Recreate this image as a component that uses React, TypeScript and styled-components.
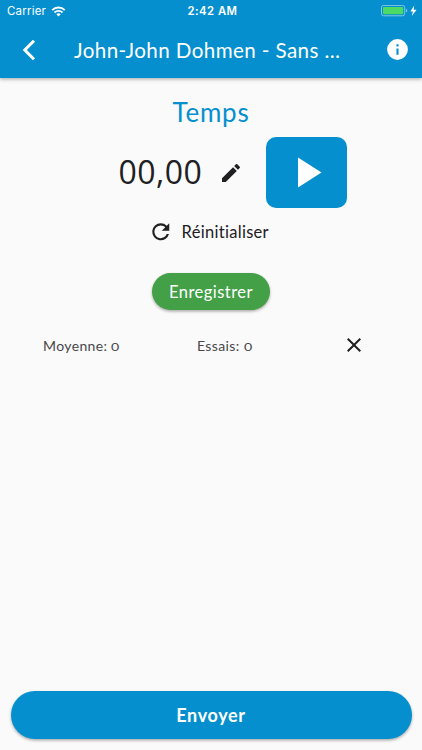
import React from "react";
import styled, { createGlobalStyle } from "styled-components";

const BLUE = "#058fce";
const INK = "#202023";

const GlobalStyle = createGlobalStyle`
  * { box-sizing: border-box; }
  body { margin: 0; background: #fafafa; }
  button { border: 0; padding: 0; margin: 0; background: none; font: inherit; color: inherit; }
  svg { display: block; flex: none; }
`;

const Screen = styled.div`
  display: flex;
  flex-direction: column;
  width: 422px;
  height: 750px;
  background: #fafafa;
  color: ${INK};
  font-family: Lato, "Open Sans", sans-serif;
  white-space: nowrap;
  overflow: hidden;
`;

const Header = styled.header`
  flex: none;
  height: 78px;
  background: ${BLUE};
  color: #fff;
  box-shadow: 0 1px 4px rgba(0, 0, 0, 0.35);
`;

const StatusBar = styled.div`
  display: grid;
  grid-template-columns: 1fr auto 1fr;
  align-items: center;
  height: 22px;
  padding: 0 4px 0 7px;
  font: 400 11.5px/22px Inter, sans-serif;
`;

const Carrier = styled.div`
  display: flex;
  align-items: center;
  gap: 5px;
  letter-spacing: 0.2px;
`;

const Clock = styled.div`
  font-weight: 600;
  font-size: 11.3px;
  letter-spacing: 0.45px;
`;

const Power = styled.div`
  display: flex;
  justify-content: flex-end;
  align-items: center;
`;

const NavBar = styled.div`
  display: flex;
  align-items: center;
  height: 56px;
  padding: 0 12px 1px 22px;
`;

const Title = styled.h1`
  flex: 1;
  margin: 0 0 0 38px;
  font-size: 20.6px;
  font-weight: 400;
  line-height: 28px;
  letter-spacing: 0.4px;
`;

const Main = styled.main`
  flex: 1;
  display: flex;
  flex-direction: column;
  align-items: center;
`;

const Heading = styled.h2`
  margin: 18px 0 0;
  font-size: 26px;
  font-weight: 400;
  line-height: 32px;
  letter-spacing: 0.75px;
  color: ${BLUE};
`;

const TimerRow = styled.div`
  display: flex;
  align-items: center;
  width: 100%;
  height: 71px;
  margin-top: 9px;
  padding-left: 118px;
`;

const Time = styled.div`
  width: 101px;
  margin-top: -1px;
  padding-left: 0.5px;
  font: 400 32px/44px "Open Sans", sans-serif;
  letter-spacing: 0.45px;
`;

const PlayButton = styled.button`
  display: flex;
  align-items: center;
  justify-content: center;
  width: 81px;
  height: 71px;
  margin-left: 23px;
  padding-left: 6px;
  border-radius: 10px;
  background: ${BLUE};
  color: #fff;
`;

const ResetButton = styled.button`
  display: flex;
  align-items: center;
  gap: 8px;
  height: 24px;
  margin: 12px 5px 1px 0;
  font-size: 16.5px;
  letter-spacing: 0.3px;
`;

const PillButton = styled.button<{ $wide?: boolean }>`
  flex: none;
  width: ${(p) => (p.$wide ? "401px" : "118px")};
  height: ${(p) => (p.$wide ? "48px" : "37px")};
  border-radius: 24px;
  background: ${(p) => (p.$wide ? BLUE : "#43a047")};
  color: #fff;
  font-size: ${(p) => (p.$wide ? "18px" : "16.5px")};
  font-weight: ${(p) => (p.$wide ? 700 : 400)};
  letter-spacing: ${(p) => (p.$wide ? "0.65px" : "0.45px")};
  box-shadow: 0 1.5px 3px rgba(0, 0, 0, 0.32);
`;

const SaveSlot = styled.div`
  margin-top: 28px;
`;

const Stats = styled.div`
  display: grid;
  grid-template-columns: 154px 145px 24px;
  align-items: center;
  width: 100%;
  height: 24px;
  margin-top: 23px;
  padding-left: 43px;
  font-size: 14px;
  letter-spacing: 0.38px;
  color: #48484a;
`;

const Zero = styled.span`
  display: inline-block;
  font-size: 10.5px;
  transform: scaleX(1.35);
  transform-origin: left;
`;

const Footer = styled.footer`
  flex: none;
  display: flex;
  padding: 0 0 11px 10.5px;
`;

const Icon = ({ d, size = 24, color = "currentColor" }: { d: string; size?: number; color?: string }) => (
  <svg width={size} height={size} viewBox="0 0 24 24" fill={color}>
    <path d={d} />
  </svg>
);

const PENCIL = "M3 17.25V21h3.75L17.81 9.94l-3.75-3.75L3 17.25zM20.71 7.04a1 1 0 0 0 0-1.41l-2.34-2.34a1 1 0 0 0-1.41 0l-1.83 1.83 3.75 3.75 1.83-1.83z";
const REFRESH = "M17.65 6.35A7.96 7.96 0 0 0 12 4a8 8 0 1 0 7.73 10h-2.08A6 6 0 1 1 12 6c1.66 0 3.14.69 4.22 1.78L13 11h7V4l-2.35 2.35z";
const CLOSE = "M19 6.41 17.59 5 12 10.59 6.41 5 5 6.41 10.59 12 5 17.59 6.41 19 12 13.41 17.59 19 19 17.59 13.41 12z";
const INFO = "M12 2a10 10 0 1 0 0 20 10 10 0 0 0 0-20zm1 15h-2v-6h2v6zm0-8h-2V7h2v2z";

export default function App() {
  return (
    <>
      <GlobalStyle />
      <Screen>
        <Header>
          <StatusBar>
            <Carrier>
              Carrier
              <svg width="15" height="11" viewBox="0 0 14 11" fill="none" stroke="#fff" strokeWidth="1.9">
                <path d="M.7 4.1a9 9 0 0 1 12.6 0M3 6.5a5.7 5.7 0 0 1 8 0" />
                <path d="M7 10.5 4.8 8.2a3.2 3.2 0 0 1 4.4 0z" fill="#fff" stroke="none" />
              </svg>
            </Carrier>
            <Clock>2:42 AM</Clock>
            <Power>
              <svg width="37" height="12" viewBox="0 0 37 12">
                <rect x=".5" y=".4" width="23.2" height="10.4" rx="2.2" fill="none" stroke="#82c7e7" />
                <rect x="2" y="1.9" width="20.2" height="7.4" rx="1" fill="#4cd964" />
                <path d="M25 3.8q1.3.4 1.3 1.8T25 7.4z" fill="#82c7e7" />
                <path d="M33.2.5 29.4 6.5h2.5L30.8 11l4.8-6.3h-2.9z" fill="#fff" />
              </svg>
            </Power>
          </StatusBar>
          <NavBar>
            <svg width="14" height="22" viewBox="0 0 14 22" fill="none" stroke="#fff" strokeWidth="3">
              <path d="M12 1.8 2.8 11 12 20.2" />
            </svg>
            <Title>John-John Dohmen - Sans …</Title>
            <Icon d={INFO} size={25} />
          </NavBar>
        </Header>
        <Main>
          <Heading>Temps</Heading>
          <TimerRow>
            <Time>00,00</Time>
            <Icon d={PENCIL} />
            <PlayButton aria-label="Démarrer">
              <svg width="24" height="31" viewBox="0 0 24 31" fill="#fff">
                <path d="M0 .5v30l23.5-15z" />
              </svg>
            </PlayButton>
          </TimerRow>
          <ResetButton>
            <Icon d={REFRESH} size={25.5} />
            Réinitialiser
          </ResetButton>
          <SaveSlot>
            <PillButton>Enregistrer</PillButton>
          </SaveSlot>
          <Stats>
            <div>Moyenne: <Zero>0</Zero></div>
            <div>Essais: <Zero>0</Zero></div>
            <Icon d={CLOSE} color={INK} />
          </Stats>
        </Main>
        <Footer>
          <PillButton $wide>Envoyer</PillButton>
        </Footer>
      </Screen>
    </>
  );
}
